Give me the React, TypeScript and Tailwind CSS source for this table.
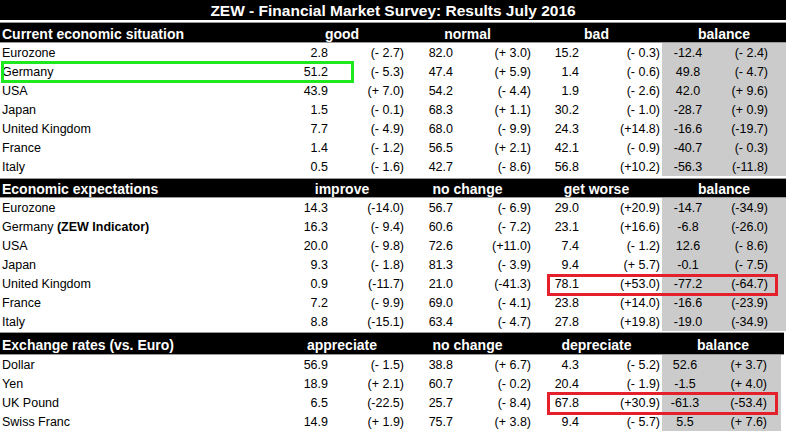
import React from 'react';

type Row = { label: React.ReactNode; cells: string[] };

interface SectionProps {
  title: string;
  heads: string[];
  rows: Row[];
  headH: string;
  last?: boolean;
}

const current: Row[] = [
  { label: 'Eurozone', cells: ['2.8', '(- 2.7)', '82.0', '(+ 3.0)', '15.2', '(- 0.3)', '-12.4', '(- 2.4)'] },
  { label: 'Germany', cells: ['51.2', '(- 5.3)', '47.4', '(+ 5.9)', '1.4', '(- 0.6)', '49.8', '(- 4.7)'] },
  { label: 'USA', cells: ['43.9', '(+ 7.0)', '54.2', '(- 4.4)', '1.9', '(- 2.6)', '42.0', '(+ 9.6)'] },
  { label: 'Japan', cells: ['1.5', '(- 0.1)', '68.3', '(+ 1.1)', '30.2', '(- 1.0)', '-28.7', '(+ 0.9)'] },
  { label: 'United Kingdom', cells: ['7.7', '(- 4.9)', '68.0', '(- 9.9)', '24.3', '(+14.8)', '-16.6', '(-19.7)'] },
  { label: 'France', cells: ['1.4', '(- 1.2)', '56.5', '(+ 2.1)', '42.1', '(- 0.9)', '-40.7', '(- 0.3)'] },
  { label: 'Italy', cells: ['0.5', '(- 1.6)', '42.7', '(- 8.6)', '56.8', '(+10.2)', '-56.3', '(-11.8)'] },
];

const expectations: Row[] = [
  { label: 'Eurozone', cells: ['14.3', '(-14.0)', '56.7', '(- 6.9)', '29.0', '(+20.9)', '-14.7', '(-34.9)'] },
  {
    label: (
      <>
        Germany <span className="font-bold">(ZEW Indicator)</span>
      </>
    ),
    cells: ['16.3', '(- 9.4)', '60.6', '(- 7.2)', '23.1', '(+16.6)', '-6.8', '(-26.0)'],
  },
  { label: 'USA', cells: ['20.0', '(- 9.8)', '72.6', '(+11.0)', '7.4', '(- 1.2)', '12.6', '(- 8.6)'] },
  { label: 'Japan', cells: ['9.3', '(- 1.8)', '81.3', '(- 3.9)', '9.4', '(+ 5.7)', '-0.1', '(- 7.5)'] },
  { label: 'United Kingdom', cells: ['0.9', '(-11.7)', '21.0', '(-41.3)', '78.1', '(+53.0)', '-77.2', '(-64.7)'] },
  { label: 'France', cells: ['7.2', '(- 9.9)', '69.0', '(- 4.1)', '23.8', '(+14.0)', '-16.6', '(-23.9)'] },
  { label: 'Italy', cells: ['8.8', '(-15.1)', '63.4', '(- 4.7)', '27.8', '(+19.8)', '-19.0', '(-34.9)'] },
];

const exchange: Row[] = [
  { label: 'Dollar', cells: ['56.9', '(- 1.5)', '38.8', '(+ 6.7)', '4.3', '(- 5.2)', '52.6', '(+ 3.7)'] },
  { label: 'Yen', cells: ['18.9', '(+ 2.1)', '60.7', '(- 0.2)', '20.4', '(- 1.9)', '-1.5', '(+ 4.0)'] },
  { label: 'UK Pound', cells: ['6.5', '(-22.5)', '25.7', '(- 8.4)', '67.8', '(+30.9)', '-61.3', '(-53.4)'] },
  { label: 'Swiss Franc', cells: ['14.9', '(+ 1.9)', '75.7', '(+ 3.8)', '9.4', '(- 5.7)', '5.5', '(+ 7.6)'] },
];

const Section: React.FC<SectionProps> = ({ title, heads, rows, headH, last }) => (
  <div className={last ? 'w-[784px]' : 'w-full'}>
    {/* black section header */}
    <div
      className={`flex ${headH} items-center border-y border-[#9a9a9a] bg-black pt-[2px] text-[14px] font-bold leading-none text-white`}
    >
      <div className="w-[280px] pl-[2px]">{title}</div>
      <div className="w-[124px] text-center">{heads[0]}</div>
      <div className="w-[127px] text-center">{heads[1]}</div>
      <div className="w-[131px] text-center">{heads[2]}</div>
      <div className="flex-1 text-center">balance</div>
    </div>
    {rows.map((row, i) => (
      <div
        key={i}
        className={`flex h-[19px] whitespace-pre text-[12.5px] leading-[18px] text-black ${last ? 'pr-[3px]' : ''}`}
      >
        <div className="w-[280px] pl-[2px] pt-[1px]">{row.label}</div>
        <div className="w-[48px] pt-[1px] text-right">{row.cells[0]}</div>
        <div className="w-[76px] pt-[1px] text-right">{row.cells[1]}</div>
        <div className="w-[49px] pt-[1px] text-right">{row.cells[2]}</div>
        <div className="w-[78px] pt-[1px] text-right">{row.cells[3]}</div>
        <div className="w-[48px] pt-[1px] text-right">{row.cells[4]}</div>
        <div className="w-[81px] pt-[1px] text-right">{row.cells[5]}</div>
        <div className="ml-[2px] flex h-full flex-1 bg-[#cbcbcb] pt-[1px]">
          <div className={`${last ? 'w-[46px]' : 'w-[52px]'} text-center`}>{row.cells[6]}</div>
          <div className={`${last ? 'w-[59px]' : 'w-[54px]'} text-right`}>{row.cells[7]}</div>
        </div>
      </div>
    ))}
  </div>
);

export default function App() {
  return (
    <div className="relative h-[432px] w-[786px] overflow-hidden bg-white font-['Liberation_Sans',Arial,sans-serif]">
      <div className="flex h-[20px] items-center justify-center bg-black pt-[2px] text-[15.5px] font-bold leading-none text-white">
        ZEW - Financial Market Survey: Results July 2016
      </div>
      <div className="h-[2px] bg-white" />

      <Section title="Current economic situation" heads={['good', 'normal', 'bad']} rows={current} headH="h-[21px]" />
      <div className="mt-[2px]">
        <Section
          title="Economic expectations"
          heads={['improve', 'no change', 'get worse']}
          rows={expectations}
          headH="h-[20px]"
        />
      </div>
      <div className="mt-[1px]">
        <Section
          title="Exchange rates (vs. Euro)"
          heads={['appreciate', 'no change', 'depreciate']}
          rows={exchange}
          headH="h-[23px]"
          last
        />
      </div>

      {/* highlight boxes */}
      <div className="absolute left-[1px] top-[61px] h-[22px] w-[353px] border-[3px] border-[#1ee81e]" />
      <div className="absolute left-[547px] top-[274px] h-[22px] w-[231px] border-[3px] border-[#e3202b]" />
      <div className="absolute left-[547px] top-[392px] h-[23px] w-[231px] border-[3px] border-[#e3202b]" />
    </div>
  );
}
